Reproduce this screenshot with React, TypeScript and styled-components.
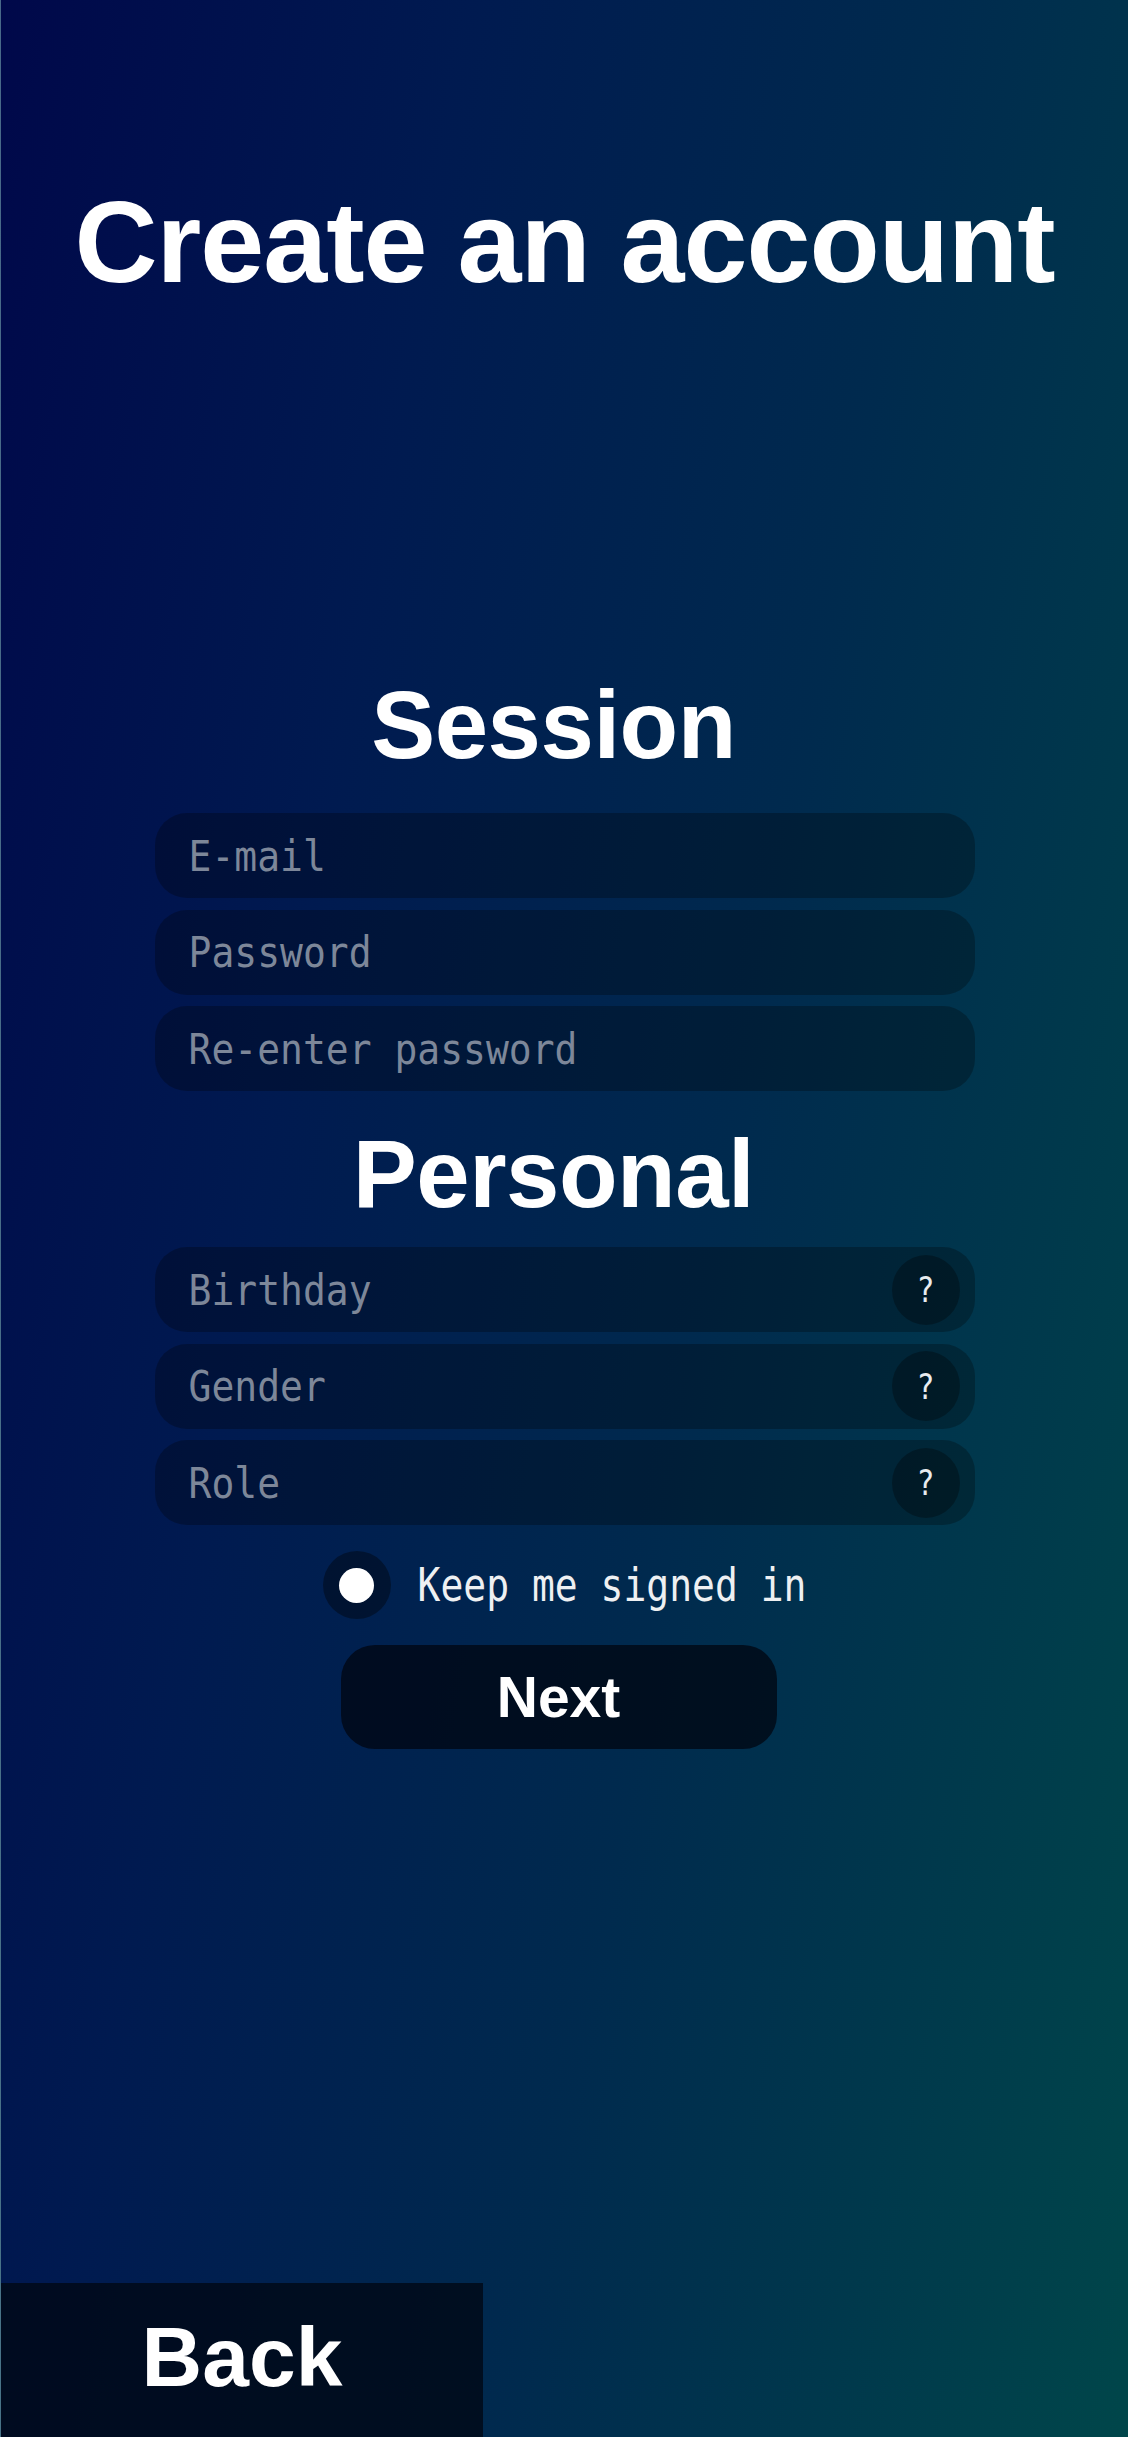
import React, { useState } from 'react'
import styled, { createGlobalStyle } from 'styled-components'

const GlobalStyle = createGlobalStyle`
  html, body {
    margin: 0;
    padding: 0;
  }
  * {
    box-sizing: border-box;
  }
`;

const Page = styled.div`
  min-height: 100vh;
  display: flex;
  flex-direction: column;
  align-items: center;
  border-left: 1px solid rgba(160, 170, 210, 0.45);
  background: linear-gradient(100deg, #00084a 0%, #001a50 30%, #002a4e 60%, #00464a 100%);
  font-family: "Liberation Sans", Arial, sans-serif;
  color: #fff;
`;

const Title = styled.h1`
  margin: 185px 0 0;
  font-size: 115px;
  line-height: 1;
  font-weight: 700;
  letter-spacing: -1px;
`;

const Heading = styled.h2<{ $top: number }>`
  margin: ${p => p.$top}px 0 0;
  font-size: 96px;
  line-height: 1;
  font-weight: 700;
  letter-spacing: -0.5px;
  padding-right: 22px;
`;

const Fields = styled.div<{ $top: number }>`
  margin-top: ${p => p.$top}px;
  width: 820px;
  display: flex;
  flex-direction: column;
  gap: 11.5px;
`;

const Field = styled.div`
  height: 85px;
  border-radius: 32px;
  background: rgba(0, 0, 0, 0.27);
  display: flex;
  align-items: center;
  padding: 0 15px 0 34px;
`;

// the mono face in the picture is narrower than DejaVu, so stretch it a little
const Input = styled.input`
  flex: 1;
  min-width: 0;
  border: none;
  outline: none;
  background: transparent;
  color: #e6e9ef;
  font-family: "DejaVu Sans Mono", "Liberation Mono", monospace;
  font-size: 38px;
  padding: 0;
  transform: scaleY(1.13);

  &::placeholder {
    color: #7d8799;
  }
`;

const Help = styled.button`
  width: 68px;
  height: 70px;
  border-radius: 50%;
  border: none;
  background: rgba(0, 0, 0, 0.3);
  color: #e8ecef;
  font-family: "DejaVu Sans Mono", monospace;
  font-size: 30px;
  display: flex;
  align-items: center;
  justify-content: center;
  padding: 0;

  span {
    display: inline-block;
    transform: scaleY(1.2);
  }
`;

const KeepRow = styled.label`
  margin-top: 26px;
  display: flex;
  align-items: center;
  gap: 27px;
  font-family: "DejaVu Sans Mono", "Liberation Mono", monospace;
  font-size: 38px;
  color: #eef0f2;
  cursor: pointer;
`;

const KeepText = styled.span`
  display: inline-block;
  transform: scaleY(1.2);
`;

const Radio = styled.span`
  width: 68px;
  height: 68px;
  border-radius: 50%;
  background: rgba(0, 0, 0, 0.38);
  display: flex;
  align-items: center;
  justify-content: center;
`;

const Dot = styled.span<{ $on: boolean }>`
  width: 35px;
  height: 35px;
  border-radius: 50%;
  background: ${p => (p.$on ? '#fff' : 'transparent')};
`;

const NextButton = styled.button`
  margin-top: 26px;
  margin-right: 12px;
  width: 436px;
  height: 104px;
  border: none;
  border-radius: 34px;
  background: rgba(0, 6, 16, 0.75);
  color: #fff;
  font-family: "Liberation Sans", Arial, sans-serif;
  font-weight: 700;
  font-size: 57px;
  cursor: pointer;
`;

const BackButton = styled.button`
  margin-top: auto;
  align-self: flex-start;
  width: 482px;
  height: 154px;
  border: none;
  background: rgba(0, 8, 22, 0.82);
  color: #fff;
  font-family: "Liberation Sans", Arial, sans-serif;
  font-weight: 700;
  font-size: 84px;
  cursor: pointer;
  padding: 0 0 6px;
`;

const App: React.FC = () => {
  // keep me signed in
  const [keep, setKeep] = useState<boolean>(true);

  const personal = ['Birthday', 'Gender', 'Role'];

  return (
    <>
      <GlobalStyle />
      <Page>
        <Title>Create an account</Title>

        {/* Session */}
        <Heading $top={377}>Session</Heading>
        <Fields $top={40}>
          <Field><Input type="email" placeholder="E-mail" /></Field>
          <Field><Input type="password" placeholder="Password" /></Field>
          <Field><Input type="password" placeholder="Re-enter password" /></Field>
        </Fields>

        {/* Personal */}
        <Heading $top={35}>Personal</Heading>
        <Fields $top={25}>
          {personal.map(p => (
            <Field key={p}>
              <Input placeholder={p} />
              <Help type="button"><span>?</span></Help>
            </Field>
          ))}
        </Fields>

        <KeepRow onClick={() => setKeep(!keep)}>
          <Radio><Dot $on={keep} /></Radio>
          <KeepText>Keep me signed in</KeepText>
        </KeepRow>

        <NextButton type="button">Next</NextButton>

        <BackButton type="button">Back</BackButton>
      </Page>
    </>
  );
};

export default App;
